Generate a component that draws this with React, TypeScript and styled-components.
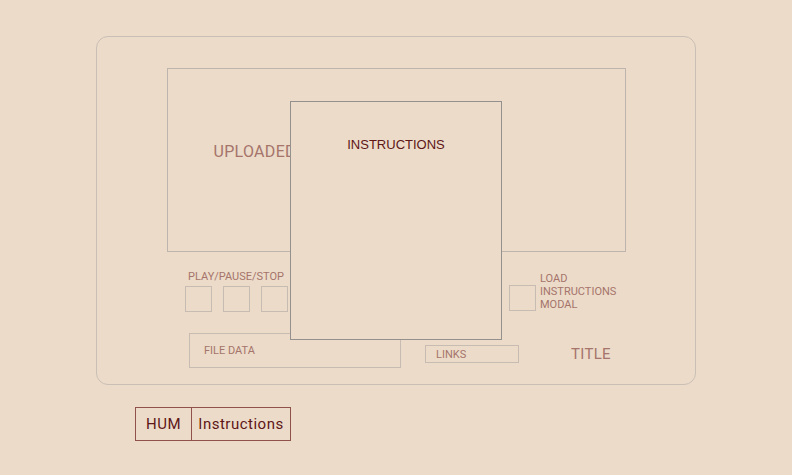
import styled, { createGlobalStyle } from 'styled-components'

const GlobalStyle = createGlobalStyle`
html, body {
    margin: 0;
    background: #ecdbc9;
    font-family: Roboto, "Liberation Sans", sans-serif;
}
`

const Page = styled.div`
padding: 36px 0 0 96px;
`

const Card = styled.div`
position: relative;
box-sizing: border-box;
width: 600px;
height: 349px;
border: 1px solid #c9bfb5;
border-radius: 12px;
display: flex;
flex-direction: column;
`

const UploadArea = styled.div`
box-sizing: border-box;
width: 459px;
height: 184px;
margin: 31px auto 0;
padding: 73px 0 0 46px;
border: 1px solid #bcb4ad;
color: #a5746b;
font-size: 16px;
line-height: 19px;
letter-spacing: 0.3px;
`

const ControlsRow = styled.div`
display: flex;
align-items: flex-start;
margin-top: 18px;
padding-left: 88px;
`

const PlayGroup = styled.div`
display: flex;
flex-direction: column;
gap: 3px;
`

const SmallLabel = styled.span`
font-size: 11px;
line-height: 13px;
color: #a5746b;
`

const PlayLabel = styled(SmallLabel)`
padding-left: 3px;
`

const SquareRow = styled.div`
display: flex;
gap: 11px;
`

const Square = styled.div`
box-sizing: border-box;
width: 27px;
height: 26px;
border: 1px solid #c6bcb2;
`

const LoadGroup = styled.div`
display: flex;
align-items: flex-end;
gap: 4px;
margin: 2px 0 0 221px;
`

const LoadText = styled(SmallLabel)`
display: flex;
flex-direction: column;
`

const BottomRow = styled.div`
display: flex;
align-items: flex-start;
margin-top: 21px;
padding-left: 92px;
`

const DataBox = styled.div<{ $w: number; $h: number; $top: number; $pad: number }>`
box-sizing: border-box;
width: ${p => p.$w}px;
height: ${p => p.$h}px;
margin-top: ${p => p.$top}px;
padding-left: ${p => p.$pad}px;
display: flex;
align-items: center;
border: 1px solid #c6bcb2;
font-size: 11px;
color: #a5746b;
`

const Title = styled.span`
margin: 12px 0 0 52px;
font-size: 15px;
line-height: 18px;
color: #a5746b;
letter-spacing: 0.3px;
`

const Modal = styled.div`
position: absolute;
left: 193px;
top: 64px;
box-sizing: border-box;
width: 212px;
height: 239px;
padding-top: 35px;
background: #ecdbc9;
border: 1px solid #94908d;
text-align: center;
font-family: "Liberation Sans", Arial, sans-serif;
font-size: 13px;
line-height: 16px;
color: #5e1616;
`

const Tabs = styled.div`
display: flex;
margin: 22px 0 0 39px;
`

const Tab = styled.div<{ $w: number }>`
box-sizing: border-box;
width: ${p => p.$w}px;
height: 34px;
display: flex;
align-items: center;
justify-content: center;
border: 1px solid #8e524b;
& + & {
    border-left: none;
}
font-size: 15px;
letter-spacing: 0.5px;
color: #5e1616;
`

export default function App() {
    return (
        <>
            <GlobalStyle />
            <Page>
                <Card>
                    <UploadArea>UPLOADED IMAGE</UploadArea>

                    <ControlsRow>
                        <PlayGroup>
                            <PlayLabel>PLAY/PAUSE/STOP</PlayLabel>
                            <SquareRow>
                                <Square />
                                <Square />
                                <Square />
                            </SquareRow>
                        </PlayGroup>
                        <LoadGroup>
                            <Square />
                            <LoadText>
                                <span>LOAD</span>
                                <span>INSTRUCTIONS</span>
                                <span>MODAL</span>
                            </LoadText>
                        </LoadGroup>
                    </ControlsRow>

                    <BottomRow>
                        <DataBox $w={212} $h={35} $top={0} $pad={14}>FILE DATA</DataBox>
                        <DataBox $w={94} $h={18} $top={12} $pad={10} style={{ marginLeft: 24 }}>LINKS</DataBox>
                        <Title>TITLE</Title>
                    </BottomRow>

                    <Modal>INSTRUCTIONS</Modal>
                </Card>

                <Tabs>
                    <Tab $w={57}>HUM</Tab>
                    <Tab $w={99}>Instructions</Tab>
                </Tabs>
            </Page>
        </>
    )
}
